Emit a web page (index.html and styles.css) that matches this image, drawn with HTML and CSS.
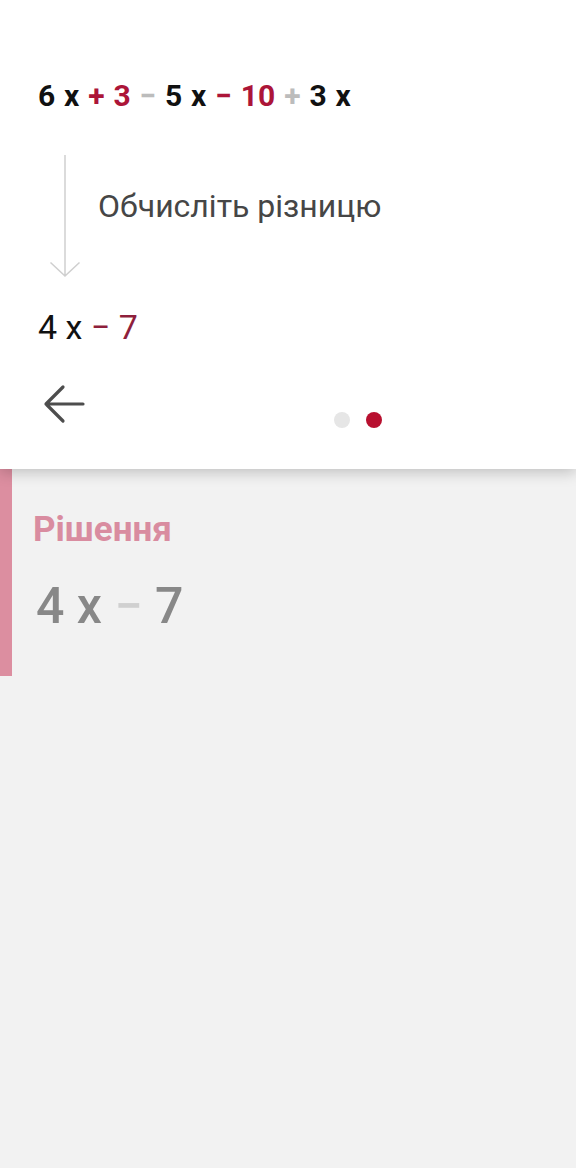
FILE: index.html
```html
<!DOCTYPE html>
<html lang="uk">
<head>
<meta charset="utf-8">
<link rel="stylesheet" href="styles.css">
</head>
<body>
<div class="card">
  <div class="expr"><span class="k">6</span> <span class="k">x</span> <span class="r">+</span> <span class="r">3</span> <span class="g">−</span> <span class="k">5</span> <span class="k">x</span> <span class="r">−</span> <span class="r">10</span> <span class="g">+</span> <span class="k">3</span> <span class="k">x</span></div>
  <div class="step">
    <svg class="down" width="32" height="124" viewBox="0 0 32 124">
      <path d="M16 0 V121 M1.5 107.5 L16 121 L30.5 107.5" fill="none" stroke="#cfcfcf" stroke-width="1.5"/>
    </svg>
    <div class="step-text">Обчисліть різницю</div>
  </div>
  <div class="result"><span>4</span> <span>x</span> <span class="dr">−</span> <span class="dr">7</span></div>
  <div class="nav">
    <svg class="back" width="42" height="40" viewBox="0 0 42 40">
      <path d="M40 20 H3 M20 3 L3 20 L20 37" fill="none" stroke="#4d4d4d" stroke-width="3.2" stroke-linecap="round" stroke-linejoin="round"/>
    </svg>
    <div class="dots">
      <span class="dot"></span>
      <span class="dot active"></span>
    </div>
  </div>
</div>
<div class="solution">
  <div class="bar"></div>
  <div class="sol-body">
    <div class="sol-title">Рішення</div>
    <div class="sol-answer"><span>4</span> <span>x</span> <span class="lg">−</span> <span>7</span></div>
  </div>
</div>
</body>
</html>
```
FILE: styles.css
```css
* { box-sizing: border-box; }
html, body {
  margin: 0;
  padding: 0;
}
body {
  background: #f2f2f2;
  font-family: Roboto, "Noto Sans", "Liberation Sans", sans-serif;
  width: 576px;
  min-height: 1168px;
}
.card {
  background: #ffffff;
  height: 469px;
  padding: 79px 0 0 38px;
  box-shadow: 0 3px 14px rgba(0, 0, 0, 0.22);
  position: relative;
  z-index: 1;
}
.expr {
  font-size: 30px;
  line-height: 34px;
  font-weight: 700;
  white-space: pre;
  word-spacing: 1px;
  letter-spacing: 0.2px;
}
.k { color: #111111; }
.r { color: #ac1538; }
.g { color: #bcbcbc; }
.step {
  display: flex;
  align-items: center;
  margin-top: 42px;
  height: 124px;
}
.down {
  display: block;
  margin-left: 11px;
  flex: none;
}
.step-text {
  margin-left: 17px;
  font-size: 32px;
  line-height: 38px;
  color: #464646;
  margin-top: -22px;
}
.result {
  margin-top: 28px;
  font-size: 34px;
  line-height: 40px;
  color: #111111;
  white-space: pre;
}
.dr { color: #8e1f3c; }
.nav {
  display: flex;
  align-items: flex-start;
  margin-top: 37px;
}
.back {
  display: block;
  margin-left: 5px;
}
.dots {
  display: flex;
  gap: 16px;
  margin-left: 249px;
  margin-top: 28px;
}
.dot {
  width: 16px;
  height: 16px;
  border-radius: 50%;
  background: #e6e6e6;
}
.dot.active { background: #b8102f; }
.solution {
  display: flex;
}
.bar {
  width: 12px;
  background: #dc8ea0;
  flex: none;
}
.sol-body {
  padding: 41px 0 40px 21px;
}
.sol-title {
  font-size: 35px;
  line-height: 40px;
  font-weight: 700;
  color: #d98ca0;
}
.sol-answer {
  margin-top: 26px;
  font-size: 50px;
  line-height: 60px;
  font-weight: 500;
  color: #888888;
  white-space: pre;
  padding-left: 3px;
}
.lg { color: #d0d0d0; }
```
